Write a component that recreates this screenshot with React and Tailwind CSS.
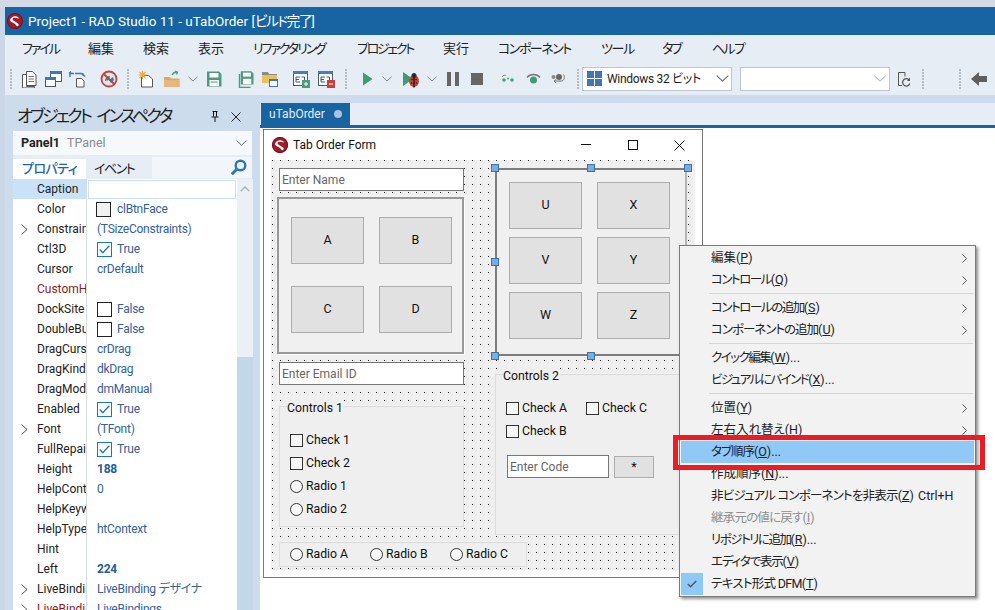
import React from "react";

const Logo = ({ s = 16 }) => (
  <svg width={s} height={s} viewBox="0 0 16 16" className="shrink-0">
    <circle cx="8" cy="8" r="8" fill="#a01c2c" />
    <circle cx="8" cy="8" r="7.5" fill="none" stroke="#6d1420" strokeWidth="1" />
    <path d="M3 7c1-3.5 5-4.5 8-3l1 1.5-4-.8C6 4.5 5 6 6 7.3l5 3.2 1 1.5-2 1.5c-.5-1.5-2-2.8-4-3.8C4.500 9 3.500 8.500 3 7z" fill="#fff" />
  </svg>
);

const Chev = ({ c = "#666", w = 11, h = 6 }) => (
  <svg width={w} height={h} viewBox="0 0 11 6" className="shrink-0"><path d="M.5.5 5.500 5.200 10.500.5" fill="none" stroke={c} /></svg>
);

const Grip = () => (
  <div className="h-[20px] w-[2px] shrink-0 bg-[repeating-linear-gradient(to_bottom,#b5bcc4_0,#b5bcc4_2px,transparent_2px,transparent_3px)]" />
);

const I = ({ children, w = 18, h = 18 }) => (
  <svg width={w} height={h} viewBox={`0 0 ${w} ${h}`} className="shrink-0">{children}</svg>
);

const Save = ({ c = "#4a9d78" }) => (
  <I>
    <path d="M2 1.500h12l2.500 2.500v12.500h-14.500z" fill={c} />
    <rect x="4.500" y="3" width="9" height="4.500" fill="#fff" />
    <rect x="4.500" y="10" width="9.500" height="6" fill="#fff" />
    <rect x="5.500" y="11.500" width="7" height="1" fill={c} />
  </I>
);

const DocE = ({ c, sign }) => (
  <I>
    <rect x="1.500" y="1.500" width="14" height="14" fill="#fff" stroke="#4f5a66" />
    <rect x="1" y="1" width="15" height="3" fill="#4a7fb5" />
    <path d="M4 7h4M4 9.500h3M4 12h4M4 7v5" stroke="#3d5a80" fill="none" />
    <path d="M9.500 7h3v4" stroke="#3d5a80" fill="none" />
    <rect x="10" y="10" width="8" height="8" fill={c} />
    <path d={sign === "+" ? "M12 14h4M14 12v4" : "M12 14h4"} stroke="#fff" />
  </I>
);

const Toolbar = () => (
  <div className="flex h-[33px] items-center bg-[#e6edf5] relative">
    <div className="ml-[5px]"><Grip /></div>
    <div className="ml-[8px]">
      <I>
        <path d="M2.500 4.500h4v12h8v1.500h-12z" fill="#fff" stroke="#555" />
        <path d="M6.500 1.500h6l3.500 3.500v10.500h-9.500z" fill="#fff" stroke="#555" />
        <path d="M8.500 6.500h5.500M8.500 9h5.500M8.500 11.500h5.500" stroke="#777" />
      </I>
    </div>
    <div className="ml-[6px]">
      <I>
        <rect x="6.500" y="1.500" width="11" height="10" fill="#fff" stroke="#555" />
        <rect x="6" y="1" width="12" height="3" fill="#3b78b5" />
        <rect x="1.500" y="7.500" width="10" height="9" fill="#fff" stroke="#555" />
        <rect x="1" y="7" width="11" height="3" fill="#3b78b5" />
      </I>
    </div>
    <div className="ml-[6px]">
      <I>
        <path d="M2 7V3.500h4M3 1.500 1 3.500M14 3.500l3 3" fill="none" stroke="#3b78b5" strokeWidth="1.400" />
        <path d="M7 3.500h6c1.500 0 2.500 1 2.500 2.500" fill="none" stroke="#3b78b5" strokeWidth="1.400" />
        <path d="M8.500 8.500h5l2.500 2.500v6h-7.500z" fill="#fff" stroke="#555" />
      </I>
    </div>
    <div className="ml-[14px]">
      <I>
        <circle cx="9" cy="9" r="7.500" fill="#d8e8f0" stroke="#c8403a" strokeWidth="1.800" />
        <path d="M5 11c0-3 2-5 5-5l-1 4z" fill="#3f8f6c" />
        <path d="M9 10l4-3 1 3-3 3z" fill="#3b78b5" />
        <path d="M3.500 3.800 14.500 14.200" stroke="#c8403a" strokeWidth="2" />
      </I>
    </div>
    <div className="ml-[9px]"><Grip /></div>
    <div className="ml-[8px]">
      <I>
        <path d="M4.500 5.500h7l4 3.500v8H4.500z" fill="#fff" stroke="#555" />
        <path d="M5.500 1v8M1.500 5h8M2.500 2l6 6M8.500 2l-6 6" stroke="#f0a93c" strokeWidth="1.200" />
      </I>
    </div>
    <div className="ml-[8px]">
      <I>
        <path d="M1 7h6l1 1.500h8.500V17H1z" fill="#d9a766" />
        <path d="M1 10h15.500v7H1z" fill="#e4b97e" />
        <path d="M9 5c1-2 3-3 5-3M12 1l2.500 1-1 2.500" fill="none" stroke="#4a9d78" strokeWidth="1.300" />
      </I>
    </div>
    <div className="ml-[7px]"><Chev c="#777" w={10} /></div>
    <div className="ml-[7px]"><Save /></div>
    <div className="ml-[14px]">
      <I>
        <path d="M2.500 4v13.500h11" fill="none" stroke="#4a9d78" strokeWidth="1.400" />
        <g transform="translate(2 0) scale(.88)"><path d="M2 1.500h12l2.500 2.500v12.500h-14.500z" fill="#4a9d78" /><rect x="4.500" y="3" width="9" height="4.500" fill="#fff" /><rect x="4.500" y="10" width="9.500" height="6" fill="#fff" /></g>
      </I>
    </div>
    <div className="ml-[6px]">
      <I>
        <path d="M1 2h6l1 2h8v6H1z" fill="#8a8a8a" />
        <path d="M1 5h15v8H1z" fill="#e8c25a" />
        <rect x="8.500" y="9.500" width="8" height="7" fill="#fff" stroke="#3b78b5" />
        <rect x="8" y="9" width="9" height="2" fill="#3b78b5" />
      </I>
    </div>
    <div className="ml-[13px]"><DocE c="#4a9d78" sign="+" /></div>
    <div className="ml-[7px]"><DocE c="#c8403a" sign="-" /></div>
    <div className="ml-[10px]"><Grip /></div>
    <div className="ml-[15px]">
      <I w={12} h={18}><path d="M1 2.500 10.500 9 1 15.500z" fill="#3f9a76" /></I>
    </div>
    <div className="ml-[8px]"><Chev c="#777" w={10} /></div>
    <div className="ml-[9px]">
      <I w={20}>
        <path d="M2 2v14l10-7z" fill="#3f9a76" />
        <ellipse cx="13" cy="11" rx="5" ry="6" fill="#c8403a" />
        <circle cx="13" cy="5.500" r="2.500" fill="#333" />
        <path d="M13 5v12M11 9.500h.01M15 9.500h.01M10.500 13h.01M15.500 13h.01" stroke="#222" strokeWidth="1.500" strokeLinecap="round" />
      </I>
    </div>
    <div className="ml-[6px]"><Chev c="#777" w={10} /></div>
    <div className="ml-[10px] flex gap-[4px]">
      <div className="h-[14px] w-[4px] bg-[#666]" />
      <div className="h-[14px] w-[4px] bg-[#666]" />
    </div>
    <div className="ml-[12px] h-[12px] w-[12px] bg-[#666]" />
    <div className="ml-[18px]">
      <I w={16} h={14}>
        <path d="M1 5c1-2 3-2 4-1.500" fill="none" stroke="#888" />
        <circle cx="3" cy="8" r="1.800" fill="#4a9d78" />
        <circle cx="11" cy="8" r="1.800" fill="#4a9d78" />
        <circle cx="7" cy="6.500" r="1" fill="#4a9d78" />
      </I>
    </div>
    <div className="ml-[9px]">
      <I w={16} h={14}>
        <path d="M1 5.500C4 1.500 11 1.500 14 5.500" fill="none" stroke="#777" strokeWidth="1.300" />
        <circle cx="7.500" cy="8" r="3.500" fill="#3f9a76" />
      </I>
    </div>
    <div className="ml-[8px]">
      <I w={16} h={16}>
        <circle cx="3.500" cy="6" r="2" fill="#888" />
        <circle cx="9" cy="6" r="3" fill="#666" />
        <path d="M13.500 3.500c1.500 2 1 5.500-1.500 6.500H4l2 2M4 10l2-1.500" fill="none" stroke="#777" />
      </I>
    </div>
    <div className="ml-[11px]"><Grip /></div>
    <div className="ml-[3px] flex h-[24px] w-[150px] items-center border border-[#bac7d4] bg-white pl-[4px] pr-[2px]">
      <svg width="15" height="15" viewBox="0 0 15 15" className="shrink-0"><path d="M0 0h7v7H0zM8 0h7v7H8zM0 8h7v7H0zM8 8h7v7H8z" fill="#3f78b0" /></svg>
      <span className="ml-[5px] flex-1 whitespace-nowrap text-[12px] leading-none tracking-[-0.300px] text-[#222] [font-feature-settings:'palt']">Windows 32 ビット</span>
      <Chev c="#666" w={13} h={7} />
    </div>
    <div className="ml-[8px] flex h-[24px] w-[150px] items-center justify-end border border-[#bac7d4] bg-white pr-[3px]">
      <Chev c="#b9c3cd" w={12} h={7} />
    </div>
    <div className="ml-[7px]">
      <I w={14} h={16}>
        <path d="M8 1.500H1.500v13H5" fill="none" stroke="#555" />
        <path d="M8 1.500v4" stroke="#555" />
        <path d="M12.500 9.500a3.700 3.700 0 1 0 .3 3" fill="none" stroke="#555" strokeWidth="1.300" />
        <path d="M13 6.500v3.500h-3z" fill="#555" />
      </I>
    </div>
    <div className="ml-[11px]"><Grip /></div>
    <div className="ml-[35px]"><Grip /></div>
    <div className="ml-[10px]">
      <I w={17} h={16}><path d="M0 8 8 1v4h8v6H8v4z" fill="#5f5f5f" /></I>
    </div>
  </div>
);

const MENUS = [
  ["ファイル", "w-[66px] tracking-[-2px]"], ["編集", "w-[55px]"], ["検索", "w-[55px]"], ["表示", "w-[55px]"],
  ["リファクタリング", "w-[104px] tracking-[-2.100px]"], ["プロジェクト", "w-[86px] tracking-[-2.300px]"], ["実行", "w-[55px]"],
  ["コンポーネント", "w-[103px] tracking-[-1.500px]"], ["ツール", "w-[61px] tracking-[-1.300px]"], ["タブ", "w-[50px] tracking-[-2px]"], ["ヘルプ", "w-[50px] tracking-[-1.700px]"],
];

const PROPS = [
  { n: "Caption", sel: true },
  { n: "Color", swatch: true, v: "clBtnFace" },
  { n: "Constraints", x: true, v: "(TSizeConstraints)" },
  { n: "Ctl3D", on: true, v: "True" },
  { n: "Cursor", v: "crDefault" },
  { n: "CustomHint", red: true },
  { n: "DockSite", off: true, v: "False" },
  { n: "DoubleBuffered", off: true, v: "False" },
  { n: "DragCursor", v: "crDrag" },
  { n: "DragKind", v: "dkDrag" },
  { n: "DragMode", v: "dmManual" },
  { n: "Enabled", on: true, v: "True" },
  { n: "Font", x: true, v: "(TFont)" },
  { n: "FullRepaint", on: true, v: "True" },
  { n: "Height", b: true, v: "188" },
  { n: "HelpContext", v: "0" },
  { n: "HelpKeyword" },
  { n: "HelpType", v: "htContext" },
  { n: "Hint" },
  { n: "Left", b: true, v: "224" },
  { n: "LiveBindings", x: true, v: "LiveBinding デザイナ" },
  { n: "LiveBindings", x: true, red: true, v: "LiveBindings" },
];

const PropRow = ({ p }) => (
  <div className="flex h-[20px] shrink-0 items-center">
    <div className={`flex h-[20px] w-[73px] shrink-0 items-center overflow-hidden whitespace-nowrap ${p.sel ? "bg-[#c9e2f8]" : ""}`}>
      <div className="flex w-[24px] shrink-0 justify-start pl-[8px]">
        {p.x && (
          <svg width="7" height="11" viewBox="0 0 7 11"><path d="M.5.5 6 5.500.5 10.500" fill="none" stroke="#555" /></svg>
        )}
      </div>
      <span className={p.red ? "text-[#8a1c1c]" : "text-[#222]"}>{p.n}</span>
    </div>
    <div className="flex h-[20px] flex-1 items-center border-l border-[#d8dde3] pl-[10px]">
      {p.sel && <div className="-ml-[9px] h-[19px] w-[148px] border border-[#c9e2f8] bg-white" />}
      {p.swatch && <div className="mr-[6px] h-[15px] w-[15px] -ml-[1px] border border-[#222] bg-[#f0f0f0]" />}
      {p.off && <div className="mr-[5px] h-[15px] w-[15px] border border-[#222] bg-white" />}
      {p.on && (
        <div className="mr-[5px] flex h-[15px] w-[15px] items-center justify-center border border-[#1a74c8] bg-white">
          <svg width="11" height="9" viewBox="0 0 11 9"><path d="M.7 4.500 3.800 7.800 10.300.8" fill="none" stroke="#1a74c8" strokeWidth="1.300" /></svg>
        </div>
      )}
      {p.v && <span className={`whitespace-nowrap tracking-[-0.250px] [font-feature-settings:'palt'] ${p.b ? "font-bold text-[#245e96]" : "text-[#34609c]"}`}>{p.v}</span>}
    </div>
  </div>
);

const Inspector = () => (
  <div className="flex h-[515px] w-[255px] shrink-0 flex-col overflow-hidden bg-[#cddcec] px-[8px]">
    <div className="flex h-[36px] shrink-0 items-center pl-[4px] pt-[7px]">
      <span className="whitespace-nowrap text-[17px] leading-none tracking-[-2.700px] text-[#222] [font-feature-settings:'palt']">オブジェクト<span className="ml-[6px]">インスペクタ</span></span>
      <svg className="ml-auto mr-[12px]" width="8" height="11" viewBox="0 0 8 11"><path d="M1.500.5h5M2.500 1v4.500M5.500 1v4.500M.5 6h7M4 6v5" stroke="#111" fill="none" /></svg>
      <svg className="mr-[11px]" width="10" height="10" viewBox="0 0 10 10"><path d="M.5.5l9 9M9.500.5l-9 9" stroke="#222" /></svg>
    </div>
    <div className="flex h-[24px] shrink-0 items-center bg-[#f6f9fc] pl-[8px] pr-[5px]">
      <b className="font-bold text-[#222]">Panel1</b>
      <span className="ml-[7px] text-[#8a8a8a]">TPanel</span>
      <span className="ml-auto"><Chev c="#666" /></span>
    </div>
    <div className="flex h-[24px] shrink-0 items-end bg-[#e6edf5]">
      <div className="flex h-[20px] w-[73px] items-center justify-center bg-white text-[13px] font-medium tracking-[-0.600px] text-[#1c66a8] [font-feature-settings:'palt']">プロパティ</div>
      <div className="flex h-[20px] w-[66px] items-center pl-[8px] text-[13px] tracking-[-1.500px] text-[#222] [font-feature-settings:'palt']">イベント</div>
      <div className="mb-[1px] flex h-[21px] flex-1 items-center justify-end bg-[#f2f6fa] pr-[5px]">
        <svg width="17" height="17" viewBox="0 0 17 17"><circle cx="10.500" cy="6.500" r="4.800" fill="none" stroke="#2d77b8" strokeWidth="2.400" /><path d="M7 10 1.800 15.200" stroke="#2d77b8" strokeWidth="3" /></svg>
      </div>
    </div>
    <div className="flex min-h-0 flex-1 bg-white text-[12px]">
      <div className="flex w-[224px] shrink-0 flex-col overflow-hidden">
        {PROPS.map((p, i) => <PropRow key={i} p={p} />)}
      </div>
      <div className="flex w-[16px] shrink-0 flex-col bg-[#e9f0f6]">
        <div className="flex h-[20px] shrink-0 items-center justify-center">
          <svg width="10" height="6" viewBox="0 0 10 6"><path d="M.7 5.300 5 1l4.300 4.300" fill="none" stroke="#a9b3bd" strokeWidth="1.400" /></svg>
        </div>
        <div className="mt-[158px] flex-1 bg-[#c4d7e8]" />
      </div>
    </div>
  </div>
);

const Btn = ({ c, t }) => (
  <div className={`absolute flex items-center justify-center border border-[#adadad] bg-[#e1e1e1] text-[12.500px] text-[#111] ${c}`}>{t}</div>
);
const Edit = ({ c, t }) => (
  <div className={`absolute flex items-center border border-[#777] bg-white pl-[2px] text-[12px] text-[#666] ${c}`}>{t}</div>
);
const Chk = ({ c, t }) => (
  <div className={`absolute flex items-center text-[12.250px] text-[#111] ${c}`}>
    <div className="mr-[3px] h-[13px] w-[13px] border border-[#333] bg-[#f8f8f8]" />{t}
  </div>
);
const Rad = ({ c, t }) => (
  <div className={`absolute flex items-center text-[12.250px] text-[#111] ${c}`}>
    <div className="mr-[3px] h-[13px] w-[13px] rounded-full border border-[#333] bg-[#f8f8f8]" />{t}
  </div>
);
const H = ({ c }) => <div className={`absolute h-[8px] w-[8px] border border-[#3a72ad] bg-[#7fabdc] ${c}`} />;

const Form = () => (
  <div className="ml-[3px] mt-[1px] flex h-[449px] w-[440px] flex-col border border-[#777] bg-white">
    <div className="flex h-[30px] shrink-0 items-center pl-[8px] pr-[17px]">
      <Logo />
      <span className="ml-[5px] text-[12px] text-[#111]">Tab Order Form</span>
      <svg className="ml-auto" width="10" height="2" viewBox="0 0 10 2"><path d="M0 .5h10" stroke="#111" /></svg>
      <svg className="ml-[37px]" width="10" height="10" viewBox="0 0 10 10"><rect x=".5" y=".5" width="9" height="9" fill="none" stroke="#111" /></svg>
      <svg className="ml-[36px]" width="11" height="11" viewBox="0 0 11 11"><path d="M.5.5l10 10M10.500.5l-10 10" stroke="#111" /></svg>
    </div>
    <div className="relative ml-[7px] h-[410px] w-[424px] bg-[#f0f0f0] bg-[radial-gradient(circle_at_1.5px_0.5px,#333_0.6px,transparent_0.7px)] bg-[length:8px_8px]">
      <Edit c="left-[8px] top-[8px] h-[23px] w-[185px]" t="Enter Name" />
      <div className="absolute left-[6px] top-[37px] h-[157px] w-[187px] border-2 border-[#999] bg-[#f0f0f0] shadow-[1px_1px_0_#fff]" />
      <Btn c="left-[20px] top-[57px] h-[47px] w-[73px]" t="A" />
      <Btn c="left-[108px] top-[57px] h-[47px] w-[73px]" t="B" />
      <Btn c="left-[20px] top-[126px] h-[47px] w-[73px]" t="C" />
      <Btn c="left-[108px] top-[126px] h-[47px] w-[73px]" t="D" />
      <Edit c="left-[8px] top-[202px] h-[23px] w-[185px]" t="Enter Email ID" />
      <div className="absolute left-[8px] top-[246px] h-[121px] w-[185px] border border-[#dcdcdc] bg-[#efefef]" />
      <div className="absolute left-[16px] top-[239px] bg-[#efefef] text-[12.250px] text-[#111]">Controls 1</div>
      <Chk c="left-[19px] top-[272px] h-[16px]" t="Check 1" />
      <Chk c="left-[19px] top-[295px] h-[16px]" t="Check 2" />
      <Rad c="left-[19px] top-[318px] h-[16px]" t="Radio 1" />
      <Rad c="left-[19px] top-[341px] h-[16px]" t="Radio 2" />

      <div className="absolute left-[224px] top-[8px] h-[188px] w-[192px] border-2 border-[#7d7d7d] border-r-[#b5b5b5] bg-[#f0f0f0]" />
      <Btn c="left-[238px] top-[22px] h-[47px] w-[73px]" t="U" />
      <Btn c="left-[326px] top-[22px] h-[47px] w-[73px]" t="X" />
      <Btn c="left-[238px] top-[77px] h-[47px] w-[73px]" t="V" />
      <Btn c="left-[326px] top-[77px] h-[47px] w-[73px]" t="Y" />
      <Btn c="left-[238px] top-[132px] h-[47px] w-[73px]" t="W" />
      <Btn c="left-[326px] top-[132px] h-[47px] w-[73px]" t="Z" />
      <H c="left-[220px] top-[4px]" /><H c="left-[316px] top-[4px]" /><H c="left-[413px] top-[4px]" />
      <H c="left-[220px] top-[98px]" /><H c="left-[220px] top-[192px]" /><H c="left-[316px] top-[192px]" />

      <div className="absolute left-[224px] top-[214px] h-[161px] w-[192px] border border-[#dcdcdc] bg-[#efefef]" />
      <div className="absolute left-[232px] top-[207px] bg-[#efefef] text-[12.250px] text-[#111]">Controls 2</div>
      <Chk c="left-[235px] top-[240px] h-[16px]" t="Check A" />
      <Chk c="left-[315px] top-[240px] h-[16px]" t="Check C" />
      <Chk c="left-[235px] top-[263px] h-[16px]" t="Check B" />
      <Edit c="left-[236px] top-[295px] h-[23px] w-[102px]" t="Enter Code" />
      <Btn c="left-[343px] top-[296px] h-[22px] w-[40px]" t="*" />

      <div className="absolute left-[8px] top-[382px] h-[25px] w-[248px] border border-[#dedede] bg-[#efefef]" />
      <Rad c="left-[19px] top-[386px] h-[16px]" t="Radio A" />
      <Rad c="left-[99px] top-[386px] h-[16px]" t="Radio B" />
      <Rad c="left-[179px] top-[386px] h-[16px]" t="Radio C" />
    </div>
  </div>
);

const Item = ({ t, k, s = "", arrow, hi, off, chk, extra, tr = "" }) => (
  <div className={`relative flex h-[22px] shrink-0 items-center pl-[30px] ${hi ? "bg-[#90c8f8]" : ""} ${off ? "text-[#8f8f8f]" : "text-[#222]"}`}>
    {chk && (
      <div className="absolute left-[0px] top-0 flex h-[22px] w-[22px] items-center justify-center bg-[#90c8f8]">
        <svg width="10" height="8" viewBox="0 0 10 8"><path d="M.8 4 3.600 6.800 9.200 1" fill="none" stroke="#555" strokeWidth="1.500" /></svg>
      </div>
    )}
    <span className="whitespace-nowrap [font-feature-settings:'palt']"><span className={tr}>{t}</span>(<u>{k}</u>){s}</span>
    {extra && <span className="absolute left-[237px] whitespace-nowrap">{extra}</span>}
    {arrow && (
      <svg className="absolute left-[281px] top-[7px]" width="5" height="9" viewBox="0 0 5 9"><path d="M.5.5 4.500 4.500.5 8.500" fill="none" stroke="#555" /></svg>
    )}
  </div>
);
const Sep = () => <div className="mb-[3px] ml-[28px] mr-[1px] mt-[2px] h-[1px] shrink-0 bg-[#d4d4d4]" />;

const ContextMenu = () => (
  <div className="absolute left-[679px] top-[245px] flex h-[352px] w-[297px] flex-col border border-[#7a7a7a] bg-[#f2f2f2] px-[1px] pt-[1px] text-[12.500px] shadow-[2px_2px_3px_rgba(0,0,0,0.45)]">
    <Item t="編集" k="P" arrow />
    <Item t="コントロール" k="Q" arrow tr="tracking-[-1.500px]" />
    <Sep />
    <Item t="コントロールの追加" k="S" arrow tr="tracking-[-1.450px]" />
    <Item t="コンポーネントの追加" k="U" arrow tr="tracking-[-1px]" />
    <Sep />
    <Item t="クイック編集" k="W" s="..." tr="tracking-[-1.500px]" />
    <Item t="ビジュアルにバインド" k="X" s="..." tr="tracking-[-1.500px]" />
    <Sep />
    <Item t="位置" k="Y" arrow />
    <Item t="左右入れ替え" k="H" arrow />
    <Item t="タブ順序" k="O" s="..." hi tr="tracking-[-1px]" />
    <Item t="作成順序" k="N" s="..." />
    <Item t="非ビジュアル コンポーネントを非表示" k="Z" extra="Ctrl+H" tr="tracking-[-0.800px]" />
    <Item t="継承元の値に戻す" k="I" off tr="tracking-[-0.800px]" />
    <Item t="リポジトリに追加" k="R" s="..." tr="tracking-[-1.500px]" />
    <Item t="エディタで表示" k="V" tr="tracking-[-1.200px]" />
    <Item t="テキスト形式 DFM" k="T" chk tr="tracking-[-0.700px]" />
  </div>
);

export default function App() {
  return (
    <div className="relative flex h-[610px] w-[995px] flex-col overflow-hidden bg-[#d3dae6] pt-[7px] text-[12.500px] [font-family:'Roboto','Noto_Sans_CJK_JP',sans-serif]">
      <div className="flex min-h-0 flex-1 flex-col bg-[#c9d7e7] pl-[5px]">
        <div className="flex h-[28px] shrink-0 items-center bg-[#1864a2] pl-[2px] text-[13.500px] text-white">
          <Logo s={16} />
          <span className="ml-[5px] whitespace-nowrap [font-feature-settings:'palt']">Project1 - RAD Studio 11 - uTabOrder [<span className="tracking-[-1.300px]">ビルド完了</span>]</span>
        </div>
        <div className="flex h-[27px] shrink-0 items-center bg-[#e6edf5] pl-[17px] text-[13px] text-[#222] [font-feature-settings:'palt']">
          {MENUS.map(([m, w]) => <div key={m} className={`shrink-0 ${w}`}>{m}</div>)}
        </div>
        <Toolbar />
        <div className="flex min-h-0 flex-1">
          <Inspector />
          <div className="flex min-w-0 flex-1 flex-col bg-white">
            <div className="h-[8px] shrink-0 bg-[#cddcec]" />
            <div className="flex h-[22px] shrink-0 bg-[#e6edf5]">
              <div className="ml-[1px] flex w-[89px] items-center bg-[#1864a2] pl-[8px] text-[12px] text-[#e6edf5]">
                uTabOrder
                <span className="ml-[9px] h-[8px] w-[8px] rounded-full bg-[#a8c4e0]" />
              </div>
            </div>
            <div className="h-[3px] shrink-0 bg-[#1864a2]" />
            <Form />
          </div>
        </div>
      </div>
      <ContextMenu />
      <div className="absolute left-[673px] top-[435px] h-[35px] w-[312px] border-[5px] border-[#ed1c24]" />
    </div>
  );
}
